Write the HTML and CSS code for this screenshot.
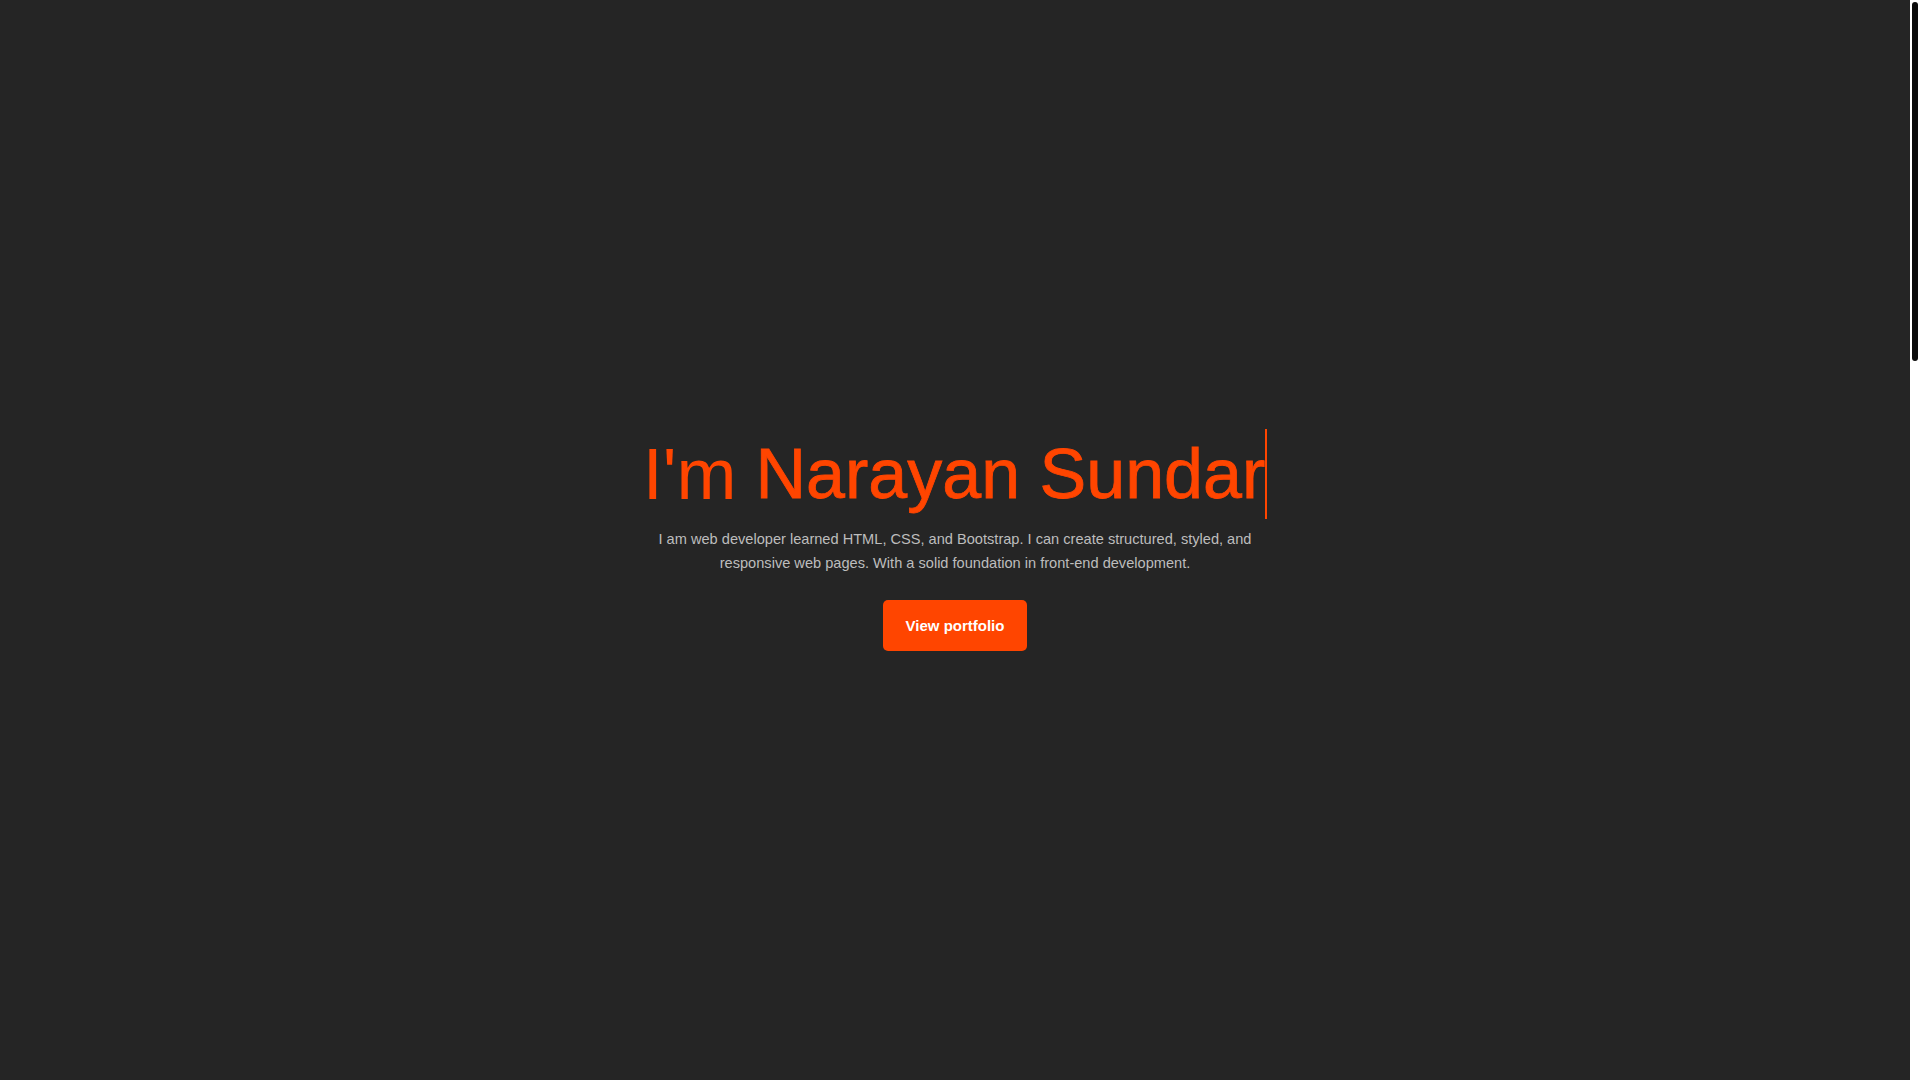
FILE: index.html
```html
<!DOCTYPE html>
<html lang="en">
<head>
<meta charset="utf-8">
<title>Narayan Sundar</title>
<link rel="stylesheet" href="styles.css">
</head>
<body>
<div class="page">
  <section class="hero">
    <h1 class="hero-title"><span class="hero-im">I'm</span><span class="hero-name">Narayan Sundar</span></h1>
    <p class="hero-text">I am web developer learned HTML, CSS, and Bootstrap. I can create structured, styled, and responsive web pages. With a solid foundation in front-end development.</p>
    <a class="hero-btn" href="#portfolio">View portfolio</a>
  </section>
  <section class="filler" id="portfolio"></section>
</div>
<div class="scrollbar" aria-hidden="true"><div class="scrollbar-thumb"></div></div>
</body>
</html>
```

FILE: styles.css
```css
html, body {
  margin: 0;
  padding: 0;
  height: 100%;
  overflow: hidden;
}
body {
  background: #252525;
  font-family: "Liberation Sans", Arial, sans-serif;
  color: #bdbdbd;
  display: flex;
}
.page {
  flex: 1;
  height: 100vh;
  overflow: hidden;
}
.scrollbar {
  width: 10px;
  height: 100vh;
  background: #ffffff;
  box-sizing: border-box;
  padding: 2px 2px 0;
  flex-shrink: 0;
}
.scrollbar-thumb {
  height: 359px;
  background: #0b0b0b;
  border-radius: 3px;
}
.hero {
  height: 100vh;
  display: flex;
  flex-direction: column;
  align-items: center;
  justify-content: center;
  text-align: center;
}
.hero-title {
  margin: 0 0 8px;
  font-size: 70px;
  font-weight: normal;
  line-height: 90px;
  color: #ff4500;
  display: flex;
  align-items: stretch;
}
.hero-im {
  font-family: "Liberation Sans Narrow", "Liberation Sans", sans-serif;
  font-stretch: condensed;
  font-size: 72px;
  margin-right: 19px;
}
.hero-name {
  display: inline-block;
  border-right: 2px solid #ff4500;
  -webkit-text-stroke: 0.8px #ff4500;
}
.hero-text {
  margin: 0 0 25px;
  max-width: 600px;
  font-size: 14.6px;
  line-height: 24px;
  color: #bdbdbd;
}
.hero-btn {
  display: inline-block;
  box-sizing: border-box;
  height: 51px;
  line-height: 51px;
  padding: 0 23px;
  background: #ff4500;
  color: #ffffff;
  font-weight: bold;
  font-size: 15px;
  text-decoration: none;
  border-radius: 5px;
}
.filler {
  height: 2150px;
}
```
